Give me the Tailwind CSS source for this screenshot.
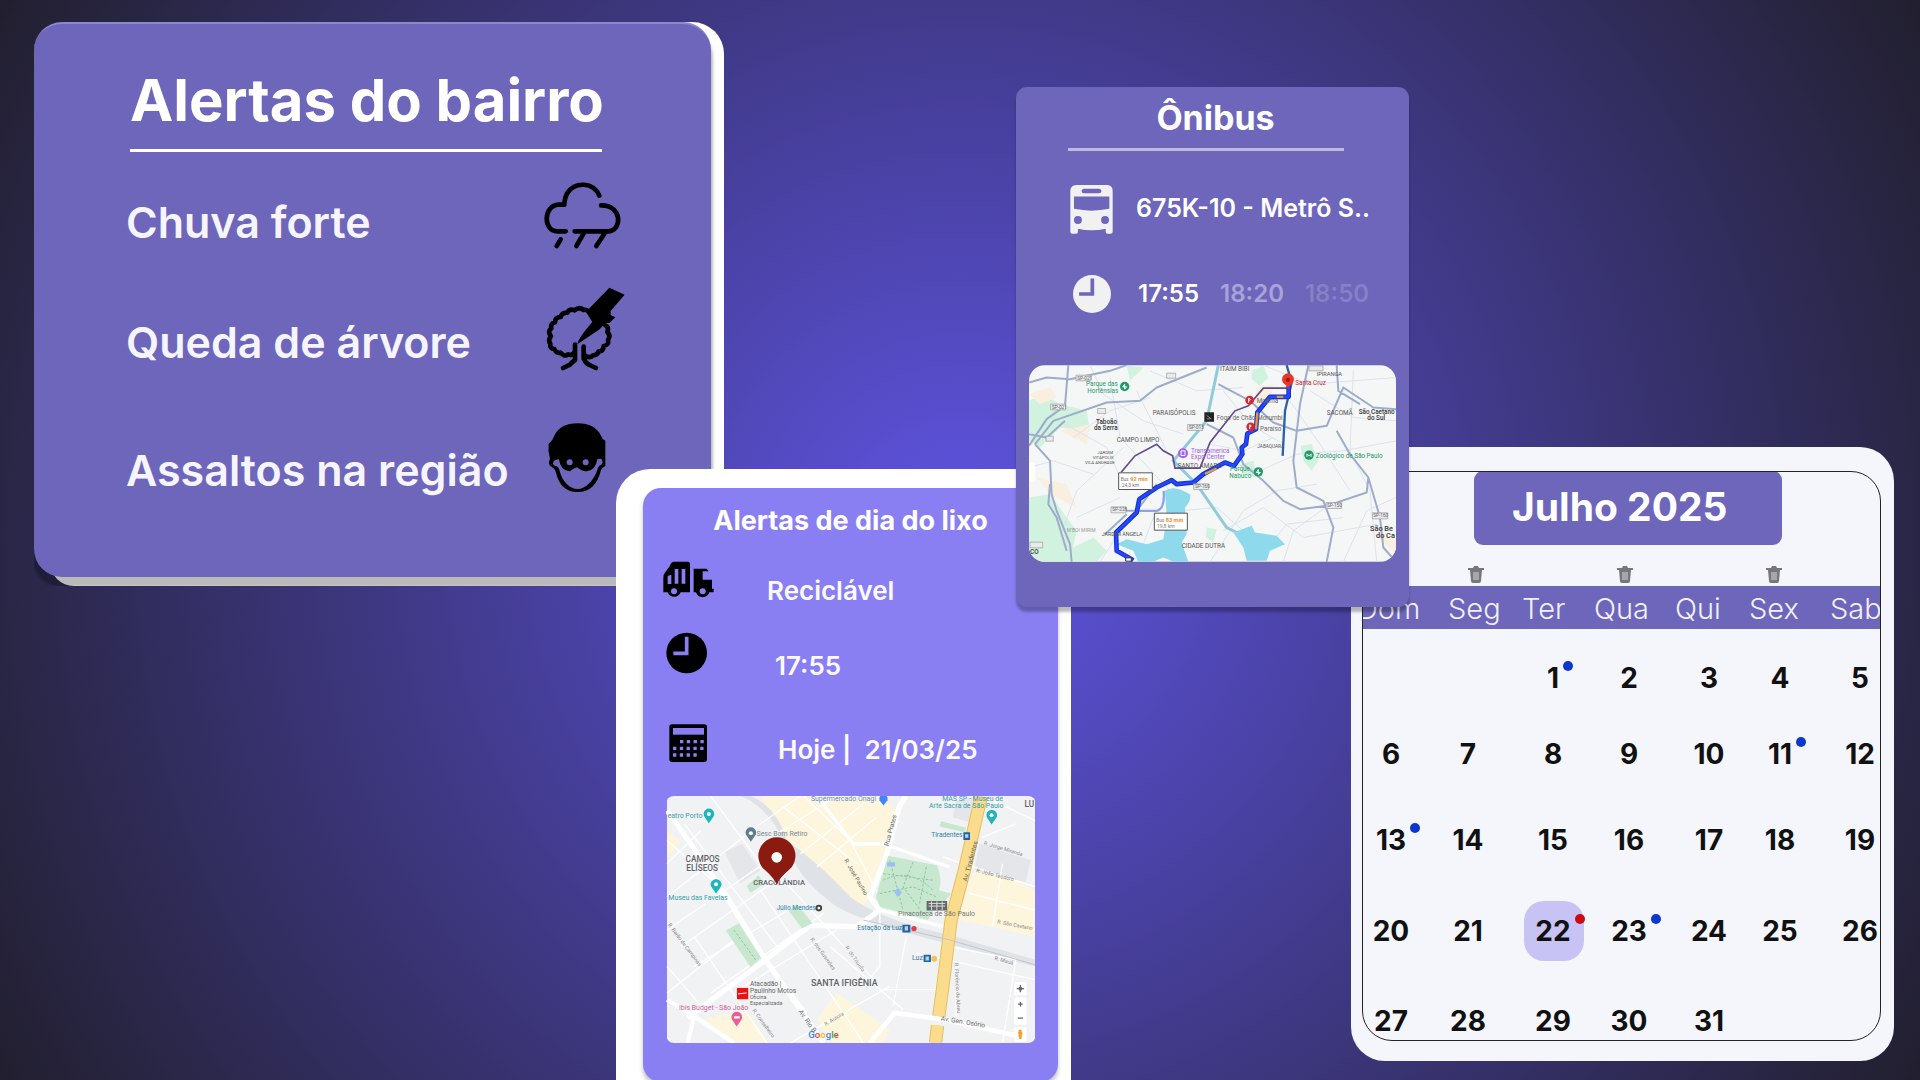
<!DOCTYPE html>
<html lang="pt-BR">
<head>
<meta charset="utf-8">
<meta name="viewport" content="width=device-width, initial-scale=1">
<title>Painel do bairro</title>
<script src="https://cdn.jsdelivr.net/npm/@tailwindcss/browser@4"></script>
</head>
<body class="font-['Inter',sans-serif] text-white">
<main class="relative h-screen min-h-[1080px] w-full overflow-hidden bg-[radial-gradient(circle_farthest-corner_at_center,#5f54e2_0%,#211f2e_100%)]">

  <!-- Alertas do bairro -->
  <section class="absolute left-[34px] top-[22px] h-[564px] w-[690px] overflow-hidden">
    <div class="absolute inset-y-0 left-4 right-0 rounded-bl-3xl rounded-tl-[44px] rounded-tr-[32px] bg-white"></div>
    <div class="relative mr-[13px] flex h-[555px] flex-col rounded-[28px] border-t-2 border-[#8d87cb] bg-[#6d66bb] px-[92px] pt-[42px] shadow-[0_8px_3px_2px_rgba(0,0,0,0.27)]">
      <h1 class="pl-1 text-[58px] leading-[68px] font-bold whitespace-nowrap">Alertas do bairro</h1>
      <hr class="mt-[15px] ml-1 h-[3px] w-[472px] border-0 bg-white">
      <ul class="mt-[10px] text-[43px] leading-[50px] font-semibold text-[#f6f5ff]">
        <li class="flex h-[120px] items-center justify-between whitespace-nowrap">Chuva forte
          <svg class="-mr-[6px] h-[120px] w-[84px] shrink-0" viewBox="63 -24 252 360" fill="none" stroke="#000" stroke-width="14" stroke-linecap="round" stroke-linejoin="round"><path d="M238 77C220 35 165 35 143 68Q134 82 133 104L116 104C70 106 68 183 112 184H137M243 106C306 104 310 183 262 184H164M191 190L169 228M254 190L229 228M122 208L110 228"/></svg>
        </li>
        <li class="flex h-[120px] items-center justify-between whitespace-nowrap">Queda de árvore
          <svg class="-mr-[6px] h-[120px] w-[84px] shrink-0" viewBox="63 336 252 360" fill="none" stroke="#000" stroke-width="14" stroke-linecap="round" stroke-linejoin="round"><path d="M208 427Q200 417 190 420Q178 409 164 421Q148 415 142 428Q126 427 122 441Q105 441 105 457Q90 461 94 475Q82 486 93 498Q83 511 91 521Q89 537 103 537Q109 552 122 548Q133 562 144 553Q156 558 162 548M165 524V570Q155 577 150 584L129 594M191 530V566Q199 582 209 585L228 594M195 556Q209 567 219 556Q232 556 235 545Q251 543 251 528Q268 525 264 510Q273 497 262 486Q268 471 256 466"/><path d="M268 353L314 374L272 423V435L286 442L268 459H256L239 478L172 523Q175 504 217 456L200 429L207 416Z" fill="#000" stroke="none"/></svg>
        </li>
        <li class="mt-2 flex h-[120px] items-center justify-between whitespace-nowrap">Assaltos na região
          <svg class="-mr-[6px] h-[120px] w-[84px] shrink-0" viewBox="63 720 252 360"><path d="M86 822Q98 812 103 797Q121 760 173 760Q224 760 243 797Q246 807 256 812V888Q246 892 243 900Q227 966 173 966Q122 966 108 908Q105 895 94 890Q82 884 90 866Q83 843 86 822Z"/><path d="M105 870Q93 882 105 887Q116 888 118 899C126 936 151 957 173 957C196 957 223 931 233 896Q236 886 243 885Q252 878 244 866L230 867Q218 897 205 900Q192 902 184 892Q173 885 162 892Q149 906 135 892L119 867Z" fill="#6d66bb"/><circle cx="149" cy="877" r="9" fill="#6d66bb"/><circle cx="197" cy="877" r="9" fill="#6d66bb"/><path d="M121 866Q126 898 149 899Q163 887 173 887Q188 901 200 899Q222 898 228 866" fill="none" stroke="#000" stroke-width="9"/></svg>
        </li>
      </ul>
    </div>
  </section>

  <!-- Calendário -->
  <section class="absolute left-[1351px] top-[447px] h-[614px] w-[543px] rounded-[34px] bg-[#f5f6fc] pt-[24px] pl-[11px]">
    <div class="relative h-[570px] w-[519px] overflow-hidden rounded-[30px] border border-[#222] text-[#111]">
      <h2 class="ml-[111px] -mt-px flex h-[74px] w-[308px] items-center rounded-[9px] bg-[#6d66bb] pl-[38px] pb-[3px] text-[39px] leading-[46px] font-bold text-white">Julho 2025</h2>
      <div class="mt-[20px] ml-[103px] flex gap-[129px]">
        <svg class="h-[20px] w-[20px]" viewBox="0 0 20 20" fill="#77777b"><path d="M2 3h5l1-2h4l1 2h5v2H2zM4 5h12l-1 11q0 2-2 2H7q-2 0-2-2z"/><path d="M7 7h6v8H7z" fill="#a7a7ab"/></svg>
        <svg class="h-[20px] w-[20px]" viewBox="0 0 20 20" fill="#77777b"><path d="M2 3h5l1-2h4l1 2h5v2H2zM4 5h12l-1 11q0 2-2 2H7q-2 0-2-2z"/><path d="M7 7h6v8H7z" fill="#a7a7ab"/></svg>
        <svg class="h-[20px] w-[20px]" viewBox="0 0 20 20" fill="#77777b"><path d="M2 3h5l1-2h4l1 2h5v2H2zM4 5h12l-1 11q0 2-2 2H7q-2 0-2-2z"/><path d="M7 7h6v8H7z" fill="#a7a7ab"/></svg>
      </div>
      <table class="mt-px block">
        <thead class="block h-[43px] bg-[#6d66bb] text-[29px] leading-[46px] text-[#f2f1fb]">
          <tr class="-ml-[6px] grid grid-cols-[91px_74px_72px_81px_74px_81px_60px] text-left [&>th]:font-light">
            <th>Dom</th><th>Seg</th><th>Ter</th><th>Qua</th><th>Qui</th><th>Sex</th><th>Sab</th>
          </tr>
        </thead>
        <tbody class="block text-center text-[28px] leading-[34px] font-bold [&>tr]:grid [&>tr]:grid-cols-[56px_98px_72px_80px_80px_62px_98px] [&>tr]:items-end">
          <tr class="h-[66px]"><td></td><td></td><td><span class="relative">1<i class="absolute -right-[14px] top-0 size-[10px] rounded-full bg-[#0b37cf]"></i></span></td><td>2</td><td>3</td><td>4</td><td>5</td></tr>
          <tr class="h-[76px]"><td>6</td><td>7</td><td>8</td><td>9</td><td>10</td><td><span class="relative">11<i class="absolute -right-[14px] top-0 size-[10px] rounded-full bg-[#0b37cf]"></i></span></td><td>12</td></tr>
          <tr class="h-[86px]"><td><span class="relative">13<i class="absolute -right-[14px] top-0 size-[10px] rounded-full bg-[#0b37cf]"></i></span></td><td>14</td><td>15</td><td>16</td><td>17</td><td>18</td><td>19</td></tr>
          <tr class="h-[91px]"><td>20</td><td>21</td><td class="relative"><i class="absolute left-[7px] -top-[13px] h-[60px] w-[60px] rounded-[20px] bg-[#c8c3f5]"></i><span class="relative">22<i class="absolute -right-[14px] top-0 size-[10px] rounded-full bg-[#c90d12]"></i></span></td><td><span class="relative">23<i class="absolute -right-[14px] top-0 size-[10px] rounded-full bg-[#0b37cf]"></i></span></td><td>24</td><td>25</td><td>26</td></tr>
          <tr class="h-[90px]"><td>27</td><td>28</td><td>29</td><td>30</td><td>31</td><td></td><td></td></tr>
        </tbody>
      </table>
    </div>
  </section>

  <!-- Dia do lixo -->
  <section class="absolute left-[616px] top-[469px] h-[640px] w-[455px] rounded-t-[34px] bg-white pt-[19px] pl-[27px]">
    <div class="h-[594px] w-[415px] rounded-[18px] bg-[#8a7ff2] pt-[17px] shadow-[0_4px_4px_rgba(0,0,0,0.25)]">
      <h2 class="text-center text-[27px] leading-[32px] font-bold whitespace-nowrap">Alertas de dia do lixo</h2>
      <ul class="mt-[20px] ml-[17px] text-[26px] leading-[32px] font-semibold text-[#fbfaff]">
        <li class="flex h-[68px] items-center">
          <svg class="h-[68px] w-[54px]" viewBox="180 321 162 204"><path d="M221 335H265Q270 336 270 342V427H242A21 21 0 0 1 203 427H190V383Q189 375 194 369L208 350Q214 335 221 335ZM281 356H320L326 364H308V389H336V416H341V427H328A21 21 0 0 1 288 427H281Z"/><path d="M224 357h11v44h-11zM245 357h11v44h-11zM203 380q0-4 11-6v28h-11z" fill="#8a7ff2"/><circle cx="222" cy="424" r="9" fill="#8a7ff2"/><circle cx="308" cy="424" r="9" fill="#8a7ff2"/></svg>
          <span class="ml-[53px]">Reciclável</span>
        </li>
        <li class="mt-[7px] flex h-[68px] items-center">
          <svg class="h-[68px] w-[54px]" viewBox="180 546 162 204"><circle cx="260" cy="609" r="61"/><path d="M260 560V610H220" fill="none" stroke="#8a7ff2" stroke-width="11"/></svg>
          <span class="ml-[61px]">17:55</span>
        </li>
        <li class="mt-4 flex h-[68px] items-center">
          <svg class="h-[68px] w-[54px]" viewBox="180 798 162 204"><rect x="208" y="823" width="113" height="113" rx="8"/><path d="M219 834h93v20h-93z" fill="#8a7ff2"/><path d="M240 875H315M219 895H315M219 915H295" stroke="#8a7ff2" stroke-width="10" stroke-dasharray="10 10.4"/></svg>
          <span class="ml-[64px] whitespace-pre">Hoje |  21/03/25</span>
        </li>
      </ul>
      <svg class="mt-3 ml-[23px] h-[247px] w-[370px] rounded-[8px]" viewBox="48 46 1110 745" role="img" aria-label="Mapa de Santa Ifigênia" font-family="Roboto, sans-serif">
        <path d="M48 46H1158V791H48Z" fill="#f1f2f4"/>
        <path d="M330 46H690L740 90L700 250L660 350L640 380L440 235L375 130ZM48 150L90 185L48 235ZM990 250L960 300L930 420L1158 470V330ZM500 720L560 640L720 750L700 791H550ZM160 720L290 690L350 791H250Z" fill="#fdf6dc"/>
        <path d="M222 215L275 190L330 270L268 310ZM990 190L1145 240L1130 305L975 270ZM920 60L975 50L960 125L910 110Z" fill="#e4e6ea"/>
        <path d="M300 46Q380 80 410 180Q520 260 600 350Q690 420 900 465L1158 540V560L890 490Q650 430 560 380Q450 300 420 220Q360 80 270 46Z" fill="#dfe2e6"/>
        <g stroke="#fff" fill="none" stroke-width="4"><path d="M48 250L150 150M48 350L330 130L450 46M48 450L370 230M90 500L420 270M130 560L430 380M48 640L250 480M180 640L520 400M280 620L560 450M48 560L160 690M130 470L350 791M250 400L480 720M330 330L620 760M400 300L690 620M48 180L230 340L350 540L470 700M100 130L380 500M180 46L330 250M420 791L720 620M540 500L760 690M690 400V560L640 620M770 470L730 680M800 520L1158 600M700 630H870M760 46L720 130M880 230L1158 320M900 500L1100 540L1060 791M920 560V710M1000 46L1158 120M640 791L580 700M460 46L600 180L700 370M400 80L620 250M380 160L560 46M450 220L640 70M500 260L680 110M960 340L1158 390M1060 250L1030 440M1100 130L1000 170"/></g>
        <g stroke="#fff" fill="none" stroke-linejoin="round"><path d="M48 90L130 205L240 370L345 540L520 791" stroke-width="15"/><path d="M110 715L345 540L480 436L620 440L690 390L660 350L710 225L750 75L770 46" stroke-width="16"/><path d="M500 46L610 190L700 190L900 260" stroke-width="10"/><path d="M48 660L130 710L250 791M130 710L110 791" stroke-width="13"/><path d="M660 791L735 700L880 720L1110 770" stroke-width="14"/><path d="M690 390L880 440" stroke-width="10"/></g>
        <g fill="none" stroke="#e4bf60" stroke-width="40"><path d="M996 46L945 270L905 420L880 620L868 710M864 738L858 791"/></g><g fill="none" stroke="#fbdc8c" stroke-width="34"><path d="M996 46L945 270L905 420L880 620L868 710M864 738L858 791"/></g>
        <path d="M715 226L862 255Q880 300 868 330L905 340L885 365L832 370L850 395L835 420L690 380L678 350ZM225 452L265 430L332 535L300 562ZM415 392L440 372L487 430L455 446ZM288 318L325 285L340 312L300 338ZM875 122L950 142L945 155L870 138Z" fill="#c7e8cf"/>
        <path d="M700 280L850 300M690 340L790 320L860 350M720 240L760 390M790 245L760 320L820 400M830 260L810 370M700 300Q780 260 850 330M250 450L315 540" stroke="#8fc3a2" stroke-width="3" stroke-dasharray="8 5" fill="none"/>
        <path d="M712 246h24v13h-24zM733 335l12-12 12 14-14 14z" fill="#9dbef5"/>
        <path d="M640 420L900 480L1158 555" stroke="#c2c6cb" stroke-width="3" fill="none"/>
        <g font-size="21" fill="#2e7fa8"><text x="50" y="113" fill="#35a0a5">eatro Porto</text><text x="482" y="60" fill="#5b8fd6">Supermercado Onagi</text><text x="878" y="62" fill="#35a0a5">MAS SP - Museu de</text><text x="838" y="83" fill="#35a0a5">Arte Sacra de São Paulo</text><text x="845" y="171" font-size="20">Tiradentes</text><text x="318" y="168" fill="#7b8a91">Sesc Bom Retiro</text><text x="52" y="359" fill="#35a0a5">Museu das Favelas</text><text x="378" y="389" font-size="20">Júlio Mendes</text><text x="622" y="450" font-size="20">Estação da Luz</text><text x="787" y="542">Luz</text><text x="745" y="407" fill="#777">Pinacoteca de São Paulo</text><text x="84" y="692" fill="#cf5f97">Ibis Budget - São João</text></g>
        <g fill="#666" font-size="20"><text x="298" y="620">Atacadão |</text><text x="298" y="640">Paulinho Motos</text><text x="298" y="658" font-size="16">Oficina</text><text x="298" y="675" font-size="16">Especializada</text><text transform="translate(873 723) rotate(9)">Av. Gen. Osório</text><text transform="translate(716 198) rotate(-75)">Rua Prates</text><text transform="translate(582 240) rotate(60)" font-size="18">R. José Paulino</text><text transform="translate(953 305) rotate(-75)">Av. Tiradentes</text><text transform="translate(444 697) rotate(55)">Av. Rio B.</text></g>
        <g fill="#888" font-size="16"><text transform="translate(1003 192) rotate(17)">R. Jorge Miranda</text><text transform="translate(980 275) rotate(14)">R. João Teodoro</text><text transform="translate(1043 430) rotate(11)">R. São Caetano</text><text transform="translate(1035 540) rotate(15)">R. Mauá</text><text transform="translate(480 478) rotate(54)">R. dos Gusmões</text><text transform="translate(585 503) rotate(55)">R. do Triunfo</text><text transform="translate(915 550) rotate(87)">R. Florêncio de Abreu</text><text transform="translate(50 435) rotate(53)">R. Barão de Campinas</text><text transform="translate(305 693) rotate(54)">R. Conselheiro</text><text transform="translate(527 740) rotate(-32)">R. Aurora</text></g>
        <g fill="#5e6368" font-size="25" font-weight="500"><text x="104" y="244">CAMPOS</text><text x="106" y="271">ELÍSEOS</text><text x="308" y="315" font-size="23">CRACOLÂNDIA</text><text x="482" y="619" font-size="27">SANTA IFIGÊNIA</text><text x="1126" y="80">LU</text></g>
        <g id="pins"><path d="M174 128l-12-18a16 16 0 1 1 25 0zM196 340l-13-18a16 16 0 1 1 26 0zM1027 132l-12-18a16 16 0 1 1 25 0z" fill="#1fb5bd"/><path d="M301 184l-12-17a16 16 0 1 1 24 0z" fill="#607d8b"/><path d="M701 75l-12-16a16 16 0 0 1 2-13h20a16 16 0 0 1 2 13z" fill="#4285f4"/><path d="M258 741l-12-18a16 16 0 1 1 25 0z" fill="#ec5c97"/><g fill="#fff"><circle cx="174" cy="100" r="6"/><circle cx="196" cy="312" r="6"/><circle cx="1027" cy="104" r="6"/><circle cx="301" cy="158" r="6"/><path d="M250 710h17v7h-17z"/></g></g>
        <path d="M379 313Q371 294 342 268A56 56 0 1 1 417 268Q387 294 379 313Z" fill="#8b1a10"/><circle cx="379" cy="231" r="16" fill="#fff"/>
        <rect x="259" y="625" width="34" height="34" fill="#ee1111"/><path d="M262 643l26-3" stroke="#fff" stroke-width="3"/>
        <circle cx="506" cy="384" r="10" fill="#444"/><circle cx="506" cy="384" r="4" fill="#fff"/>
        <path d="M758 434h24v24h-24zM942 155h20v24h-20zM822 525h22v22h-22z" fill="#20659e"/><path d="M765 439h10v13h-10zM947 161h10v11h-10zM828 530h10v12h-10z" fill="#b8d2ee"/><circle cx="793" cy="446" r="8" fill="#d6424e"/><circle cx="854" cy="537" r="9" fill="#efc356"/>
        <path d="M831 363h62v28h-62z" fill="#66696c"/><path d="M837 370h50M837 378h50M846 364v26M862 364v26M878 364v26" stroke="#ddd" stroke-width="3"/>
        <g font-size="29"><text x="474" y="775" font-weight="500"><tspan fill="#4285f4">G</tspan><tspan fill="#ea4335">o</tspan><tspan fill="#fbbc05">o</tspan><tspan fill="#4285f4">g</tspan><tspan fill="#34a853">l</tspan><tspan fill="#ea4335">e</tspan></text></g>
        <g fill="#fff"><rect x="1095" y="607" width="38" height="40" rx="5"/><rect x="1095" y="654" width="38" height="82" rx="5"/><rect x="1095" y="743" width="38" height="44" rx="5"/></g>
        <path d="M1114 616v22M1103 627h22M1114 667v14M1107 674h14M1106 716h16" stroke="#666" stroke-width="4"/><circle cx="1114" cy="627" r="6" fill="#666"/><path d="M1107 757h13l-3 22h-7z" fill="#efa22c"/><circle cx="1113" cy="755" r="5" fill="#efa22c"/>
      </svg>
    </div>
  </section>

  <!-- Ônibus -->
  <section class="absolute left-[1016px] top-[87px] h-[520px] w-[393px] rounded-[11px] bg-[#6d66bb] pt-[11px] shadow-[0_5px_3px_rgba(0,0,0,0.27)]">
    <h2 class="pl-[6px] text-center text-[34px] leading-[40px] font-bold">Ônibus</h2>
    <hr class="mt-[10px] ml-[52px] h-[3px] w-[276px] border-0 bg-[#bdb9df]">
    <div class="mt-[33px] ml-[51px] flex h-[50px] items-center gap-[21px] text-[25px] font-semibold whitespace-nowrap">
      <span class="flex w-[48px] justify-center"><svg class="h-[49px] w-[43px]" viewBox="207 342 130 148"><path fill-rule="evenodd" fill="#f1f1f1" d="M226 342H320Q336 344 336 360V483Q336 489 330 489H320Q315 489 315 483V474Q272 484 231 474V483Q231 489 225 489H214Q208 489 208 483V360Q208 344 226 342ZM249 353Q242 354 242 360Q242 367 249 367H295Q302 367 302 360Q302 354 295 353ZM219 377V414Q272 425 326 414V377Z"/><circle cx="231" cy="448" r="12" fill="#6d66bb"/><circle cx="313" cy="448" r="12" fill="#6d66bb"/></svg></span>
      <span>675K-10 - Metrô S..</span>
    </div>
    <div class="mt-[41px] ml-[51px] flex h-[38px] items-center gap-[21px] text-[24px] font-semibold whitespace-nowrap">
      <span class="flex w-[50px] justify-center"><svg class="h-[38px] w-[38px]" viewBox="221 610 112 112"><circle cx="277" cy="666" r="56" fill="#f1f1f1"/><path d="M278 620V666H239" fill="none" stroke="#6d66bb" stroke-width="11"/></svg></span>
      <span>17:55</span><span class="text-[#a9a3d9]">18:20</span><span class="text-[#8680c6]">18:50</span>
    </div>
    <svg class="mt-[52px] ml-[13px] h-[197px] w-[367px] rounded-[16px]" viewBox="57 43 1101 590" role="img" aria-label="Mapa da linha 675K-10" font-family="Roboto, sans-serif">
      <path d="M57 43H1158V633H57Z" fill="#f5f6f6"/>
      <path d="M57 150L100 130L150 160L230 180L240 240L150 230L90 290L57 270ZM57 440L120 430L170 500L200 540L180 633H57ZM170 600L250 560L290 600L260 633H150ZM725 60L760 45L775 80L750 105L725 85ZM872 285L905 280L925 330L905 360L880 330ZM590 530L620 535L610 575L588 560ZM690 340L730 330L740 380L700 370ZM350 45L400 50L360 90Z" fill="#d0f2de"/>
      <path d="M57 130L120 110L140 140L90 160ZM150 240L240 220L230 280ZM80 380L170 400L200 470L120 430ZM740 110L790 100L780 170L730 160ZM1080 540L1158 570V610Z" fill="#faefdf"/>
      <g stroke="#dbe2ee" fill="none" stroke-width="3"><path d="M190 260L300 180L420 140M130 200L290 290L350 420M300 80L330 260L480 420M240 43L280 130L400 210L520 250M340 290L200 420L150 560M200 500L330 440M380 120L470 300M420 60L560 120L700 110M560 400L640 330L750 360L860 310L1000 300L1158 270M600 633L700 480L800 420L920 400M640 540L760 470L880 560L1100 520M740 633L830 520L1000 500M1000 633L1070 480L1158 440M900 120L1030 200L1158 210M840 150L930 280L1020 420M1030 60L1020 300L1080 420L1100 633M640 120L720 220L820 280M600 280L700 300L790 260M510 480L620 470L700 540M820 633L850 540L960 460M380 633L430 500M760 43L900 100L1158 80M57 350L130 330L250 370M270 633L350 510"/></g>
      <g stroke="#9eaccb" fill="none" stroke-width="6" stroke-linejoin="round"><path d="M57 95L110 80L180 85L300 60L350 43M57 285L110 205L165 165L175 43M75 280L130 210L290 155L390 150L440 110L590 50M57 250L110 260L165 210M75 280L120 330L125 430L140 480L180 580L185 633M120 400L115 460L140 500L170 600M590 220L670 260L700 340L760 390L820 450L870 475L950 465L1070 425L1075 380L1020 310L980 240M625 100L720 150L790 215L860 240L950 225L1000 110L1090 170L1158 175M895 43L870 160L850 330L860 410L940 450L970 530L950 633M980 43L985 120L1050 160M1075 380L1110 500L1120 590L1158 633M330 480L380 480L440 400M285 550L350 490"/></g>
      <path d="M625 43L590 210L490 330L560 400L650 530L680 545" stroke="#91cbd8" stroke-width="9" fill="none"/>
      <path d="M465 420Q490 400 540 430Q545 450 525 470L530 550L515 575L535 633H490L460 620L430 633H385L370 600L320 580L350 565L410 580L460 565L470 500ZM670 545L725 525L735 545L800 555L825 580L780 600L770 630H710L700 590Z" fill="#8edaec"/>
      <path d="M830 43L845 95L825 180L818 315" stroke="#2a62aa" stroke-width="7" fill="none"/>
      <path d="M333 365L375 315L440 280L460 300L488 315L495 352H570L600 275L675 180L715 165L760 112H835" stroke="#65488f" stroke-width="5" fill="none"/>
      <path d="M380 480H440Q465 475 461 420" stroke="#8da2ee" stroke-width="7" fill="none"/>
      <g fill="none" stroke-linejoin="round"><path d="M836 105V138H780L742 185L738 235L712 248L708 280L695 290L697 310L672 345L645 335L580 370L550 395L500 400L485 388L440 410L388 445L380 485L318 545L320 600L370 628" stroke="#1431c0" stroke-width="14"/><path d="M836 105V138H780L742 185L738 235L712 248L708 280L695 290L697 310L672 345L645 335L580 370L550 395L500 400L485 388L440 410L388 445L380 485L318 545L320 600L370 628" stroke="#2346ff" stroke-width="8"/><path d="M742 185L738 235M800 138H820M620 353L585 369" stroke="#e09a43" stroke-width="7"/></g>
      <g fill="#fff" stroke="#555" stroke-width="3"><path d="M326 366h101v50h-101zM433 487h99v51h-99z"/></g>
      <g fill="#777" font-size="17"><text x="332" y="390" font-size="14">Bus</text><text x="361" y="391" fill="#f08c28" font-weight="700">92 min</text><text x="335" y="408" font-size="15">24,3 km</text><text x="439" y="513" font-size="14">Bus</text><text x="467" y="514" fill="#f08c28" font-weight="700">83 min</text><text x="441" y="531" font-size="15">19,8 km</text></g>
      <g fill="#e8eaec" stroke="#999" stroke-width="2"><path d="M198 73h45v17h-45zM122 160h45v17h-45zM108 256h22v15h-22zM263 173h24v15h-24zM470 67h27v15h-27zM533 221h45v18h-45zM303 468h45v18h-45zM551 399h45v17h-45zM948 455h47v18h-47zM1087 486h46v18h-46zM60 574h38v17h-38zM897 45h42v15h-42z"/></g>
      <g fill="#666" font-size="14"><text x="202" y="87">SP-021</text><text x="126" y="174">SP-021</text><text x="537" y="235">SP-015</text><text x="307" y="482">SP-228</text><text x="555" y="413">SP-160</text><text x="951" y="470">SP-150</text><text x="1090" y="500">SP-160</text></g>
      <g fill="#555" font-size="19"><text x="630" y="60">ITAIM BIBI</text><text x="920" y="77" font-size="17">IPIRANGA</text><text x="428" y="193">PARAISÓPOLIS</text><text x="320" y="273">CAMPO LIMPO</text><text x="950" y="192">SACOMÃ</text><text x="503" y="351">SANTO AMARO</text><text x="515" y="593">CIDADE DUTRA</text><text x="275" y="556" font-size="16">JARDIM ÂNGELA</text><text x="170" y="543" fill="#999" font-size="15">M'BOI MIRIM</text><text x="742" y="291" font-size="14">JABAQUARA</text><text x="262" y="311" font-size="13">JARDIM</text><text x="248" y="325" font-size="13">VITÁPOLIS</text><text x="225" y="339" font-size="13">VILA ANDRADE</text></g>
      <g fill="#333" font-size="19" font-weight="500"><text x="258" y="219">Taboão</text><text x="252" y="237">da Serra</text><text x="1046" y="189">São Caetano</text><text x="1072" y="207">do Sul</text><text x="1080" y="542" font-size="22">São Be</text><text x="1098" y="561" font-size="22">do Ca</text><text x="60" y="610">CO</text></g>
      <g font-size="19" fill="#229a68"><text x="228" y="106">Parque das</text><text x="232" y="126">Hortênsias</text><text x="918" y="323">Zoológico de São Paulo</text><text x="660" y="362">Parque</text><text x="658" y="382">Nabuco</text><text x="543" y="308" fill="#a060e8">Transamerica</text><text x="543" y="324" fill="#a060e8">Expo Center</text><text x="856" y="102" fill="#c9282d">Santa Cruz</text><text x="740" y="158" fill="#666">Moema</text><text x="620" y="207" fill="#666">Fogo de Chão Morumbi</text><text x="750" y="240" fill="#666">Paraíso</text></g>
      <g fill="#229a68"><circle cx="344" cy="107" r="14"/><circle cx="897" cy="313" r="14"/><circle cx="745" cy="363" r="14"/></g><circle cx="519" cy="307" r="15" fill="#a35ff0"/><circle cx="719" cy="148" r="13" fill="#d92632"/><circle cx="722" cy="228" r="13" fill="#d92632"/>
      <g fill="none" stroke="#fff" stroke-width="3"><path d="M344 115v-15l-6 8h12zM891 318v-9l6 6 6-6v9M745 371v-15l-6 9h12zM513 300h12v14h-12zM716 155v-13q10 3 0 7M719 235v-13q10 3 0 7"/></g>
      <path d="M583 184h29v29h-29z" fill="#222"/><path d="M590 194l14 10M590 204h12" stroke="#bbb" stroke-width="2"/>
      <path d="M834 118Q832 103 822 99A18 18 0 1 1 846 99Q836 104 834 118Z" fill="#ea3527"/><circle cx="834" cy="87" r="6" fill="#981511"/>
      <path d="M57 336h13q5 0 5 6v45q0 6-5 6H57z" fill="#fff"/><path d="M347 621h17v10h-17z" fill="#fff" stroke="#333" stroke-width="3"/>
    </svg>
  </section>
</main>
</body>
</html>
